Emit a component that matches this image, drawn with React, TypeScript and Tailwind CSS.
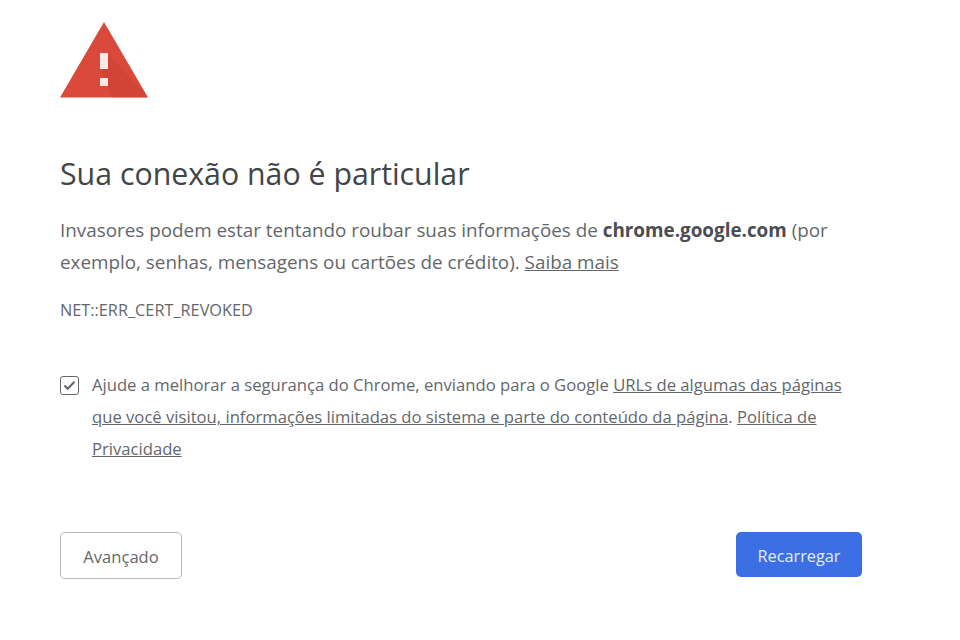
import React from 'react'

const font = { fontFamily: '"Open Sans", "Noto Sans", sans-serif' }

const WarningIcon = () => (
  <svg width="88" height="76" viewBox="0 0 88 76" className="block">
    <polygon points="44,0 88,75.5 0,75.5" fill="#d94a3a" />
    <polygon points="48,31 88,75.5 52,75.5 41,50" fill="#c23c2f" opacity="0.35" />
    <rect x="40" y="31" width="8" height="16" fill="#fbe9e7" />
    <rect x="40" y="56" width="8" height="8" fill="#fbe9e7" />
  </svg>
)

const App: React.FC = () => {
  return (
    <div className="h-[640px] w-[960px] overflow-hidden bg-white pl-[60px] pt-[22px] text-[#63676b]" style={font}>
      <div className="w-[802px]">
        <WarningIcon />

        <h1 className="mt-[53px] text-[30.3px] leading-[46px] text-[#414548]">Sua conexão não é particular</h1>

        <p className="mt-[17px] w-[790px] text-[18.85px] leading-[32px]">
          Invasores podem estar tentando roubar suas informações de{' '}
          <strong className="font-bold text-[#4a4d51]">chrome.google.com</strong> (por exemplo, senhas, mensagens ou
          cartões de crédito). <a className="underline">Saiba mais</a>
        </p>

        <div className="mt-[22px] text-[16.3px] leading-[20px]">NET::ERR_CERT_REVOKED</div>

        <div className="mt-[49px] flex items-start gap-[13px]">
          <div className="mt-[7px] flex h-[19px] w-[19px] shrink-0 items-center justify-center rounded-[3px] border-[1.5px] border-[#63676b]">
            <svg width="13" height="11" viewBox="0 0 14 12" fill="none" stroke="#63676b" strokeWidth="2.2">
              <path d="M1.5 6 L5 9.5 L12.5 2" />
            </svg>
          </div>
          <p className="w-[755px] text-[16.65px] leading-[32px]">
            Ajude a melhorar a segurança do Chrome, enviando para o Google{' '}
            <a className="underline">
              URLs de algumas das páginas que você visitou, informações limitadas do sistema e parte do conteúdo da página
            </a>
            . <a className="underline">Política de Privacidade</a>
          </p>
        </div>

        <div className="mt-[67px] flex items-start justify-between">
          <button className="flex h-[47px] w-[122px] items-center justify-center rounded-[5px] border border-[#b4b6b8] bg-white pt-[3px] text-[16.6px] text-[#63676b]">
            Avançado
          </button>
          <button className="flex h-[45px] w-[126px] items-center justify-center rounded-[5px] bg-[#3b6fe3] pt-[3px] text-[16.3px] text-[#e3edfd]">
            Recarregar
          </button>
        </div>
      </div>
    </div>
  )
}

export default App
